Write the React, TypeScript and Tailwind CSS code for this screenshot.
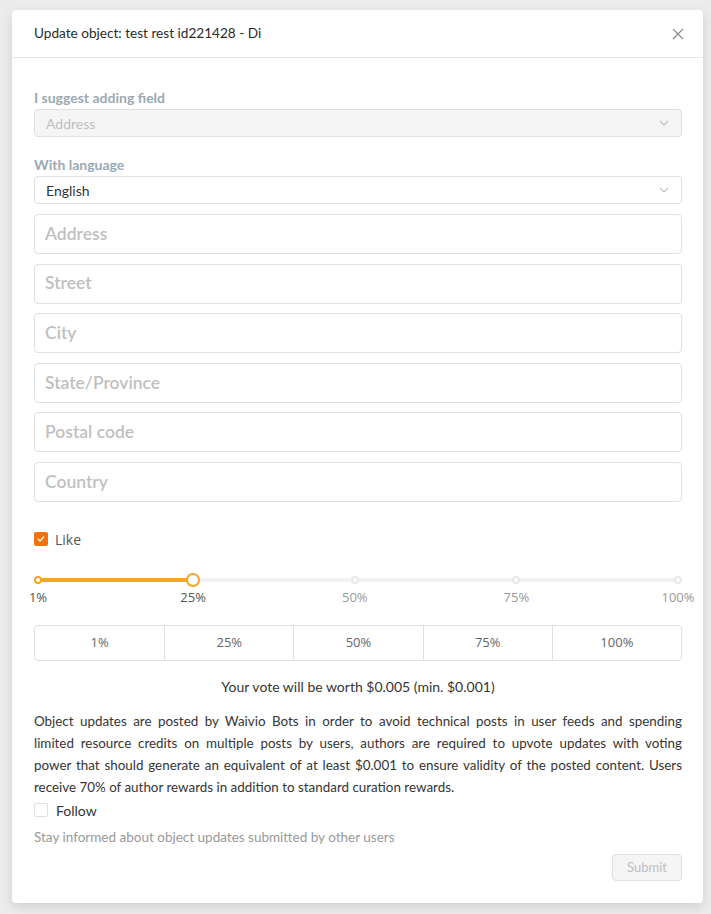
import { useState } from "react";

const fields = ["Address", "Street", "City", "State/Province", "Postal code", "Country"];
const steps = ["1%", "25%", "50%", "75%", "100%"];
const marks = [0, 24.24, 49.5, 74.75, 100];

const note = [
  "Object updates are posted by Waivio Bots in order to avoid technical posts in user feeds and spending",
  "limited resource credits on multiple posts by users, authors are required to upvote updates with voting",
  "power that should generate an equivalent of at least $0.001 to ensure validity of the posted content. Users",
  "receive 70% of author rewards in addition to standard curation rewards.",
];

function Chevron() {
  return (
    <svg width="12" height="12" viewBox="0 0 12 12" className="text-[#bfbfbf]">
      <path d="M2 4l4 4 4-4" fill="none" stroke="currentColor" strokeWidth="1.1" />
    </svg>
  );
}

export default function App() {
  const [like, setLike] = useState(true);
  const [follow, setFollow] = useState(false);

  return (
    <div
      className="min-h-[914px] bg-[#ececec] pt-[10px] pb-[11px] pl-[12px] pr-[8px]"
      style={{ fontFamily: "Lato, 'Open Sans', sans-serif" }}
    >
      <div className="rounded bg-white shadow-[0_4px_12px_rgba(0,0,0,0.12)]">
        <div className="flex h-[48px] items-center justify-between border-b border-[#e8e8e8] pl-[22px] pr-[18px]">
          <span className="text-[13.6px] text-[#2b2b2b]">Update object: test rest id221428 - Di</span>
          <svg width="14" height="14" viewBox="0 0 14 14" className="text-[#8c8c8c]">
            <path d="M2 2l10 10M12 2L2 12" stroke="currentColor" strokeWidth="1.2" />
          </svg>
        </div>

        <div className="pl-[22px] pr-[21px] pt-[30px] pb-[22px]">
          <div className="text-[14px] font-bold leading-[20px] text-[#99aab5]">I suggest adding field</div>
          <div className="mt-[1px] flex h-[28px] items-center justify-between rounded border border-[#e0e0e0] bg-[#f5f5f5] pl-[11px] pr-[11px] text-[14px] text-[#bfbfbf]">
            <span>Address</span>
            <Chevron />
          </div>

          <div className="mt-[18px] text-[14px] font-bold leading-[20px] text-[#99aab5]">With language</div>
          <div className="mt-[1px] flex h-[28px] items-center justify-between rounded border border-[#e0e0e0] bg-white pl-[11px] pr-[11px] text-[14px] text-[#353535]">
            <span>English</span>
            <Chevron />
          </div>

          <div className="mt-[10px] flex flex-col gap-[9.6px]">
            {fields.map((f) => (
              <div
                key={f}
                className="flex h-[40px] items-center rounded border border-[#e0e0e0] pl-[10px] text-[17.5px] font-semibold text-[#bfbfbf]"
              >
                {f}
              </div>
            ))}
          </div>

          <label className="mt-[27px] flex items-center gap-[7px] text-[14px] text-[#555]" style={{ fontFamily: "'Open Sans', sans-serif" }}>
            <span
              onClick={() => setLike(!like)}
              className={`flex h-[14px] w-[14px] items-center justify-center rounded-[2px] ${like ? "bg-[#f87007]" : "border border-[#d9d9d9]"}`}
            >
              {like && (
                <svg width="10" height="10" viewBox="0 0 10 10">
                  <path d="M2 5l2 2 4-4.5" fill="none" stroke="white" strokeWidth="1.3" />
                </svg>
              )}
            </span>
            Like
          </label>

          <div className="mt-[24px] px-[4px]" style={{ fontFamily: "'Open Sans', sans-serif" }}>
            <div className="relative h-[12px]">
              <div className="absolute left-0 right-0 top-[4px] h-[4px] rounded bg-[#f2f2f2]" />
              <div className="absolute left-0 top-[4px] h-[4px] w-[24.24%] rounded bg-[#f5a623]" />
              {marks.map((p, i) => (
                <span
                  key={p}
                  className={`absolute top-[2px] h-[8px] w-[8px] -translate-x-1/2 rounded-full border-2 bg-white ${i < 2 ? "border-[#f5a623]" : "border-[#e8e8e8]"}`}
                  style={{ left: `${p}%` }}
                />
              ))}
              <span className="absolute left-[24.24%] top-[-1px] h-[14px] w-[14px] -translate-x-1/2 rounded-full border-2 border-[#f5a623] bg-white" />
            </div>
            <div className="relative mt-[2px] h-[20px] text-[13px]">
              {steps.map((s, i) => (
                <span
                  key={s}
                  className={`absolute -translate-x-1/2 ${i < 2 ? "text-[#555]" : "text-[#999]"}`}
                  style={{ left: `${marks[i]}%` }}
                >
                  {s}
                </span>
              ))}
            </div>
          </div>

          <div className="mt-[17px] grid h-[36px] grid-cols-5 rounded border border-[#e0e0e0]" style={{ fontFamily: "'Open Sans', sans-serif" }}>
            {steps.map((s, i) => (
              <div
                key={s}
                className={`flex items-center justify-center text-[13px] text-[#666] ${i > 0 ? "border-l border-[#e0e0e0]" : ""}`}
              >
                {s}
              </div>
            ))}
          </div>

          <div className="mt-[15px] text-center text-[14px] text-[#353535]">
            Your vote will be worth $0.005 (min. $0.001)
          </div>

          <div className="mt-[13px] text-[13.4px] leading-[22px] text-[#353535]">
            {note.map((l, i) => (
              <div
                key={i}
                className={`whitespace-nowrap ${i < note.length - 1 ? "text-justify [text-align-last:justify]" : ""}`}
              >
                {l}
              </div>
            ))}
          </div>

          <label className="mt-[2px] flex items-center gap-[8px] text-[14px] text-[#353535]">
            <span
              onClick={() => setFollow(!follow)}
              className={`h-[14px] w-[14px] rounded-[2px] border ${follow ? "border-[#f87007] bg-[#f87007]" : "border-[#e0e0e0] bg-white"}`}
            />
            Follow
          </label>

          <div className="mt-[6px] text-[13.5px] text-[#999]">Stay informed about object updates submitted by other users</div>

          <div className="mt-[7px] flex justify-end">
            <button className="h-[27px] rounded border border-[#e0e0e0] bg-[#f5f5f5] px-[14px] text-[13px] text-[#bfbfbf]">
              Submit
            </button>
          </div>
        </div>
      </div>
    </div>
  );
}
